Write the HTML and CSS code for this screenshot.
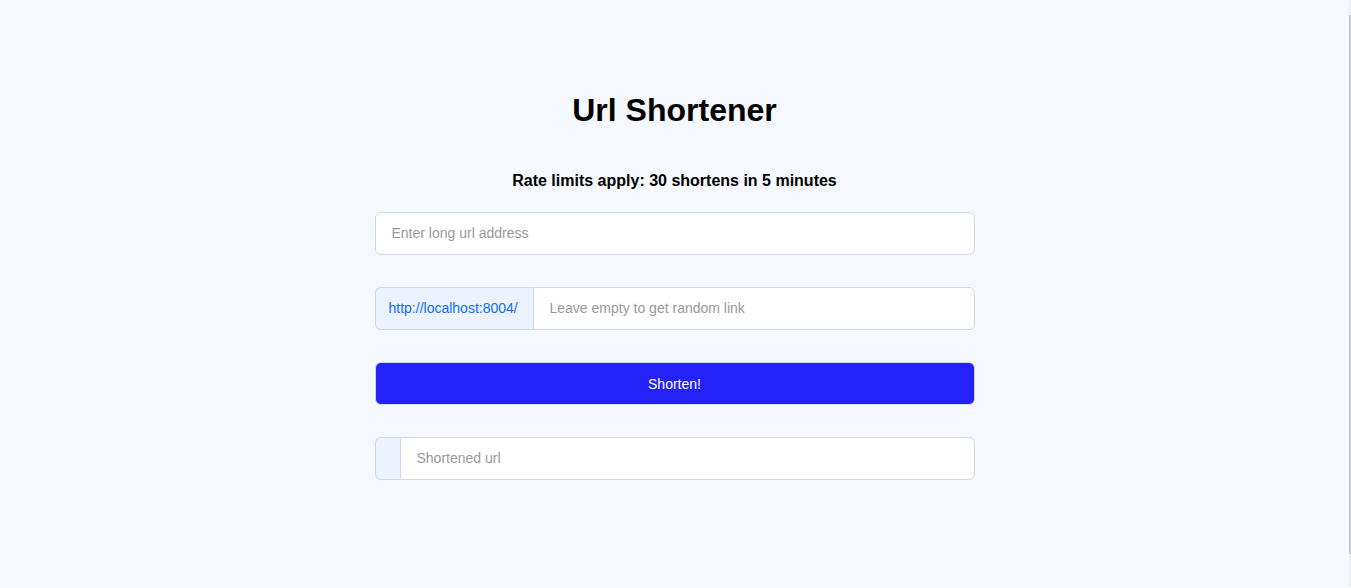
FILE: index.html
```html
<!DOCTYPE html>
<html lang="en">
<head>
<meta charset="utf-8">
<title>Url Shortener</title>
<link rel="stylesheet" href="styles.css">
</head>
<body>
<main class="page">
  <h1 class="title">Url Shortener</h1>
  <p class="note">Rate limits apply: 30 shortens in 5 minutes</p>
  <form class="form">
    <input class="field field-solo" type="text" placeholder="Enter long url address">
    <div class="group">
      <span class="prefix">http://localhost:8004/</span>
      <input class="field field-joined" type="text" placeholder="Leave empty to get random link">
    </div>
    <button class="btn" type="button">Shorten!</button>
    <div class="group">
      <span class="prefix prefix-empty"></span>
      <input class="field field-joined" type="text" placeholder="Shortened url" readonly>
    </div>
  </form>
</main>
<div class="scrollbar"><div class="thumb"></div></div>
</body>
</html>
```
FILE: styles.css
```css
* { box-sizing: border-box; }
html, body {
  margin: 0;
  padding: 0;
  background: #f5f8ff;
  font-family: "Liberation Sans", Arial, sans-serif;
  color: #000;
}
body { padding-right: 2px; }
.page {
  width: 600px;
  margin: 0 auto;
  padding-top: 92px;
  display: flex;
  flex-direction: column;
  align-items: stretch;
  text-align: center;
}
.title {
  margin: 0;
  font-size: 32px;
  line-height: 37px;
  font-weight: 700;
}
.note {
  margin: 43px 0 0;
  font-size: 16px;
  line-height: 18px;
  font-weight: 700;
}
.form {
  margin-top: 22px;
  display: flex;
  flex-direction: column;
  gap: 32px;
}
.field {
  height: 43px;
  border: 1px solid #cdd8ec;
  background: #fff;
  font-family: "Liberation Sans", Arial, sans-serif;
  font-size: 14px;
  color: #212529;
  padding: 0 16px 1px;
  outline: none;
}
.field::placeholder { color: #999; }
.field-solo { border-radius: 6px; width: 100%; }
.group {
  display: flex;
  height: 43px;
}
.prefix {
  display: flex;
  align-items: center;
  flex: 0 0 158px;
  padding: 0 0 1px 13px;
  background: #edf3fe;
  border: 1px solid #cdd8ec;
  border-right: none;
  border-radius: 6px 0 0 6px;
  color: #0d6efd;
  font-size: 14px;
  white-space: nowrap;
}
.prefix-empty { flex: 0 0 25px; padding: 0; }
.field-joined {
  flex: 1;
  min-width: 0;
  border-radius: 0 6px 6px 0;
}
.btn {
  height: 43px;
  border: 1px solid #cdd8ec;
  border-radius: 6px;
  background: #2323f9;
  color: #fff;
  font-family: "Liberation Sans", Arial, sans-serif;
  font-size: 14px;
  padding-bottom: 1px;
  cursor: pointer;
}
.scrollbar {
  position: fixed;
  top: 0;
  right: 0;
  bottom: 1px;
  width: 2px;
  background: #ececec;
  padding: 15px 0 33px;
}
.thumb {
  height: 100%;
  background: #c4c4c4;
}
```
